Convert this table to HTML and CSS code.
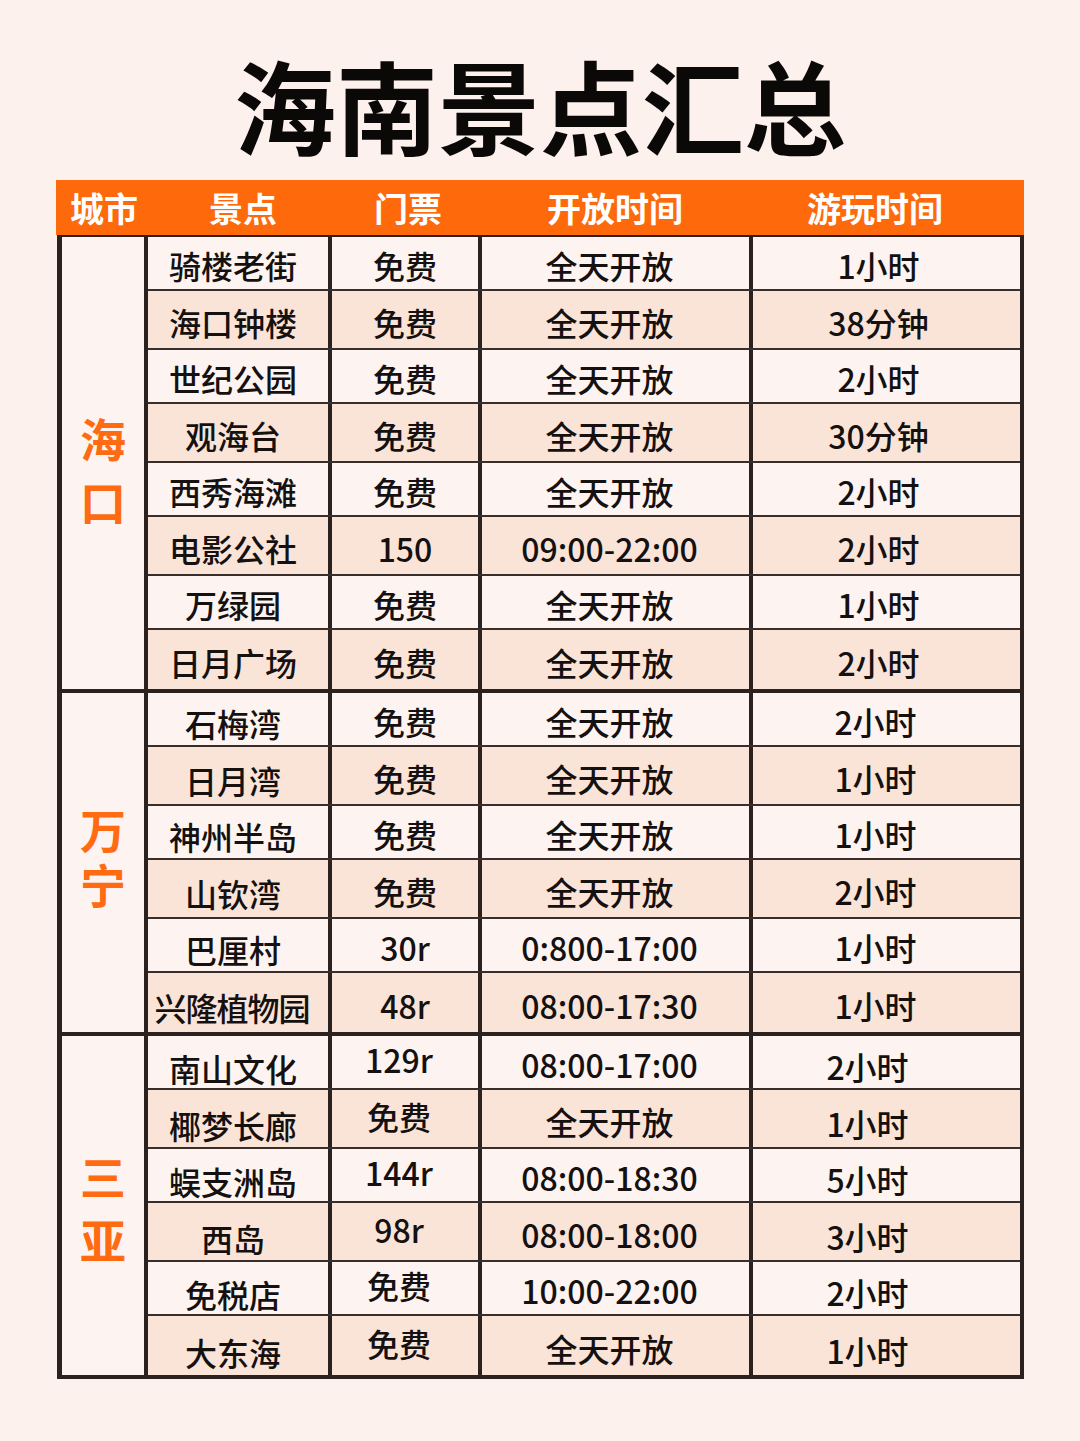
FILE: index.html
```html
<!DOCTYPE html>
<html lang="zh-CN">
<head>
<meta charset="utf-8">
<title>海南景点汇总</title>
<link rel="stylesheet" href="styles.css">
</head>
<body>
<main class="page">
  <h1 class="title">海南景点汇总</h1>
  <div class="table">
    <div class="head">
      <div class="h h-city">城市</div>
      <div class="h h-place">景点</div>
      <div class="h h-ticket">门票</div>
      <div class="h">开放时间</div>
      <div class="h h-play">游玩时间</div>
    </div>
    <div class="body">
      <section class="group">
        <div class="city city-hk"><span class="city-name">海口</span></div>
        <div class="rows haikou">
          <div class="row"><div class="c place">骑楼老街</div><div class="c">免费</div><div class="c">全天开放</div><div class="c">1小时</div></div>
          <div class="row alt"><div class="c place">海口钟楼</div><div class="c">免费</div><div class="c">全天开放</div><div class="c">38分钟</div></div>
          <div class="row"><div class="c place">世纪公园</div><div class="c">免费</div><div class="c">全天开放</div><div class="c">2小时</div></div>
          <div class="row alt"><div class="c place">观海台</div><div class="c">免费</div><div class="c">全天开放</div><div class="c">30分钟</div></div>
          <div class="row"><div class="c place">西秀海滩</div><div class="c">免费</div><div class="c">全天开放</div><div class="c">2小时</div></div>
          <div class="row alt"><div class="c place">电影公社</div><div class="c">150</div><div class="c">09:00-22:00</div><div class="c">2小时</div></div>
          <div class="row"><div class="c place">万绿园</div><div class="c">免费</div><div class="c">全天开放</div><div class="c">1小时</div></div>
          <div class="row alt"><div class="c place">日月广场</div><div class="c">免费</div><div class="c">全天开放</div><div class="c">2小时</div></div>
        </div>
      </section>
      <section class="group">
        <div class="city city-wn"><span class="city-name">万宁</span></div>
        <div class="rows wanning">
          <div class="row"><div class="c place">石梅湾</div><div class="c">免费</div><div class="c">全天开放</div><div class="c">2小时</div></div>
          <div class="row alt"><div class="c place">日月湾</div><div class="c">免费</div><div class="c">全天开放</div><div class="c">1小时</div></div>
          <div class="row"><div class="c place">神州半岛</div><div class="c">免费</div><div class="c">全天开放</div><div class="c">1小时</div></div>
          <div class="row alt"><div class="c place">山钦湾</div><div class="c">免费</div><div class="c">全天开放</div><div class="c">2小时</div></div>
          <div class="row"><div class="c place">巴厘村</div><div class="c">30r</div><div class="c">0:800-17:00</div><div class="c">1小时</div></div>
          <div class="row alt"><div class="c place wide">兴隆植物园</div><div class="c">48r</div><div class="c">08:00-17:30</div><div class="c">1小时</div></div>
        </div>
      </section>
      <section class="group">
        <div class="city city-sy"><span class="city-name">三亚</span></div>
        <div class="rows sanya">
          <div class="row"><div class="c place">南山文化</div><div class="c">129r</div><div class="c">08:00-17:00</div><div class="c">2小时</div></div>
          <div class="row alt"><div class="c place">椰梦长廊</div><div class="c">免费</div><div class="c">全天开放</div><div class="c">1小时</div></div>
          <div class="row"><div class="c place">蜈支洲岛</div><div class="c">144r</div><div class="c">08:00-18:30</div><div class="c">5小时</div></div>
          <div class="row alt"><div class="c place">西岛</div><div class="c">98r</div><div class="c">08:00-18:00</div><div class="c">3小时</div></div>
          <div class="row"><div class="c place">免税店</div><div class="c">免费</div><div class="c">10:00-22:00</div><div class="c">2小时</div></div>
          <div class="row alt"><div class="c place">大东海</div><div class="c">免费</div><div class="c">全天开放</div><div class="c">1小时</div></div>
        </div>
      </section>
    </div>
  </div>
</main>
</body>
</html>
```

FILE: styles.css
```css
* { box-sizing: border-box; }

html, body {
  margin: 0;
  padding: 0;
  background: #fdf1ee;
}

body {
  width: 1080px;
  min-height: 1441px;
  font-family: "Noto Sans CJK SC", "Noto Sans", sans-serif;
  color: #141110;
}

.page {
  padding: 44px 56px 0 56px;
}

.title {
  margin: 0;
  height: 136px;
  text-align: center;
  font-size: 102px;
  line-height: 120px;
  font-weight: 700;
  letter-spacing: 0;
  color: #0b0908;
}

.table {
  width: 968px;
}

.head {
  display: grid;
  grid-template-columns: 92px 182px 150px 270px 274px;
  height: 55px;
  background: #fe6a0b;
  color: #fff;
  align-items: center;
}

.h {
  text-align: center;
  font-size: 34px;
  font-weight: 700;
  line-height: 55px;
}

.h-city { padding-left: 4px; }
.h-place { padding-left: 8px; }
.h-ticket { padding-left: 6px; }
.h-play { padding-right: 24px; }

.body {
  border-top: 2px solid #2b211e;
  margin-left: 1px;
  width: 967px;
}

.group {
  display: flex;
  border-left: 5px solid #2b211e;
  border-right: 4px solid #2b211e;
  border-bottom: 4px solid #2b211e;
}

.city {
  width: 86px;
  flex: none;
  background: #fdf3f0;
  border-right: 4px solid #2b211e;
  display: flex;
  align-items: center;
  justify-content: center;
  color: #ff6b12;
  font-size: 46px;
  font-weight: 700;
}

.city-name {
  writing-mode: vertical-rl;
  text-orientation: upright;
  line-height: 50px;
  letter-spacing: 17px;
}

.city-hk { padding-top: 34px; }
.city-wn { padding-top: 0; }
.city-wn .city-name { letter-spacing: 9px; }
.city-sy { padding-top: 25px; }

.rows { flex: 1; }

.row {
  display: grid;
  grid-template-columns: 180px 150px 271px 267px;
  height: 54px;
  border-bottom: 2px solid #3a2e2a;
  background: #fdf4f1;
}

.row.alt {
  height: 59px;
  background: #fae4d8;
}

.row:last-child { border-bottom: 0; }

.c {
  display: flex;
  align-items: center;
  justify-content: center;
  font-size: 32px;
  line-height: 1;
  font-weight: 500;
  border-left: 4px solid #2b211e;
  white-space: nowrap;
  padding-top: 4px;
}

.c.place { border-left: 0; padding-right: 10px; }

.row .c:nth-child(3) { padding-right: 12px; }
.row .c:nth-child(4) { padding-right: 12px; }

.c.wide { letter-spacing: -1px; padding-right: 12px; }

.rows.wanning .row .c:nth-child(4) { padding-right: 18px; }
.rows.wanning .c.place { padding-top: 8px; }

.rows.sanya .c.place { padding-top: 12px; }
.rows.sanya .row .c:nth-child(2) { padding-top: 0; padding-bottom: 6px; padding-right: 12px; }
.rows.sanya .row .c:nth-child(4) { padding-right: 34px; padding-top: 8px; }
```
